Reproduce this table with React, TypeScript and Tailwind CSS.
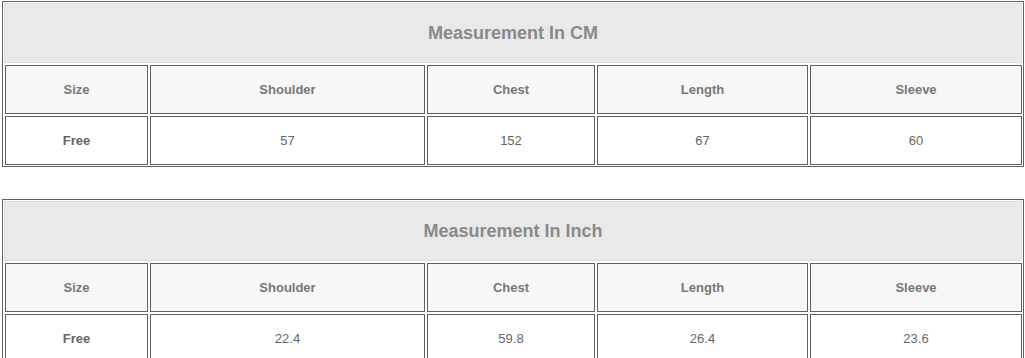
const columns = ['Size', 'Shoulder', 'Chest', 'Length', 'Sleeve'];

const tables = [
  { title: 'Measurement In CM', values: ['57', '152', '67', '60'] },
  { title: 'Measurement In Inch', values: ['22.4', '59.8', '26.4', '23.6'] },
];

const gridCols = 'grid grid-cols-[143px_275px_168px_211px_212px] gap-[2px] pl-[1px]';

const SizeTable = ({ title, values }: { title: string; values: string[] }) => {
  return (
    <div className="ml-[2px] mr-[1px] border border-[#606060] p-[1px]">
      <div className="h-[60px] border border-[#dcdcdc] bg-[#e9e9e9] flex items-center justify-center text-[18px] font-bold text-[#8a8a8a]">
        {title}
      </div>
      <div className={`${gridCols} mt-[2px]`}>
        {columns.map(col => (
          <div
            key={col}
            className="h-[49px] border border-[#606060] bg-[#f7f7f7] flex items-center justify-center text-[13px] font-bold text-[#777]"
          >
            {col}
          </div>
        ))}
      </div>
      <div className={`${gridCols} mt-[2px]`}>
        <div className="h-[49px] border border-[#606060] bg-white flex items-center justify-center text-[13px] font-bold text-[#666]">
          Free
        </div>
        {values.map((v, i) => (
          <div
            key={i}
            className="h-[49px] border border-[#606060] bg-white flex items-center justify-center text-[13px] text-[#666]"
          >
            {v}
          </div>
        ))}
      </div>
    </div>
  );
};

export default function App() {
  return (
    <div className="w-[1025px] h-[358px] overflow-hidden bg-white pt-[1px] font-['Liberation_Sans',Arial,sans-serif]">
      <div className="flex flex-col gap-[32px]">
        {tables.map(t => (
          <SizeTable key={t.title} title={t.title} values={t.values} />
        ))}
      </div>
    </div>
  );
}
